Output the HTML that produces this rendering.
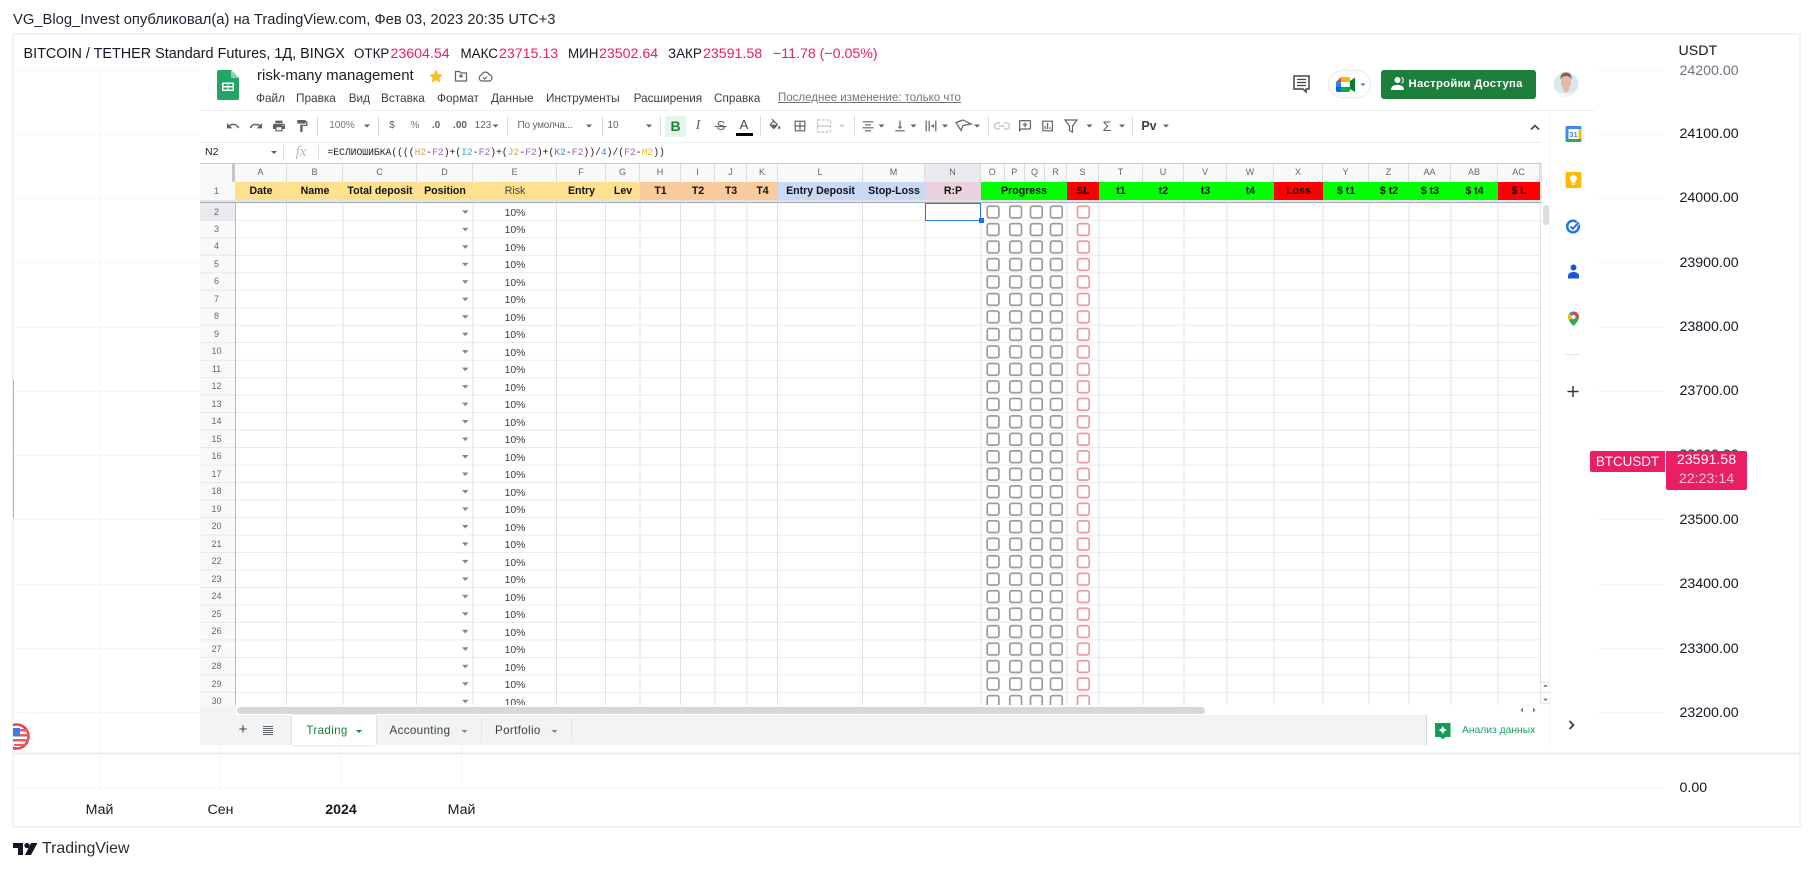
<!DOCTYPE html>
<html><head><meta charset="utf-8"><title>TradingView</title>
<style>
html,body{margin:0;padding:0;background:#fff}
body{width:1814px;height:871px;overflow:hidden;position:relative;font-family:"Liberation Sans",sans-serif;color:#131722}
.a{position:absolute;white-space:nowrap}
.l{font-size:14.2px;line-height:18px;height:18px}
.p{color:#e91e63}
.y{font-size:14.2px;line-height:18px;height:18px;left:1679.5px}
.m{font-size:11.8px;line-height:14px;top:90.5px;color:#3c4043}
.t{font-size:10px;line-height:14px;top:119px;color:#5f6368;text-align:center}
.h{top:163px;height:19px;line-height:19px;font-size:9px;color:#666;text-align:center;background:#f8f9fa;box-sizing:border-box;border-right:1px solid #dcdcdc}
.r{top:182px;height:18px;line-height:19px;font-size:10.6px;font-weight:bold;color:#111;text-align:center}
.tb{font-size:11.6px;line-height:14px;top:724px;letter-spacing:.35px;color:#3c4043}
</style></head><body>

<!-- chart frame and grid -->
<svg class="a" style="left:0;top:0" width="1814" height="871">
<rect x="13" y="34" width="1787" height="793" fill="#fff" stroke="#eeeff1" stroke-width="1.6"/>
<g stroke="#f4f5f7" stroke-width="1">
<path d="M99.5 70V788M220.5 70V788M341 70V788M461.5 70V788"/>
<path d="M13 70.5H1664M13 134.5H1664M13 198.5H1664M13 262.5H1664M13 327.5H1664M13 391.5H1664M13 455.5H1664M13 519.5H1664M13 584.5H1664M13 648.5H1664M13 712.5H1664M13 788.5H1664"/>
</g>
<path d="M13 753.5H1800" stroke="#e6e8ec" stroke-width="1.4"/>
<path d="M13.500 380V518" stroke="#ec9a9f" stroke-width="1"/>
</svg>

<div class="a" style="left:13px;top:11px;font-size:14.75px;line-height:18px;color:#1f2430">VG_Blog_Invest опубликовал(а) на TradingView.com, Фев 03, 2023 20:35 UTC+3</div>

<div class="a l" style="left:23.500px;top:44.500px;font-size:14.4px">BITCOIN / TETHER Standard Futures, 1Д, BINGX</div>
<div class="a l" style="left:354px;top:44.500px;font-size:13.400px">ОТКР</div><div class="a l p" style="left:390.500px;top:44.500px">23604.54</div>
<div class="a l" style="left:460.500px;top:44.500px;font-size:13.400px">МАКС</div><div class="a l p" style="left:499px;top:44.500px">23715.13</div>
<div class="a l" style="left:568px;top:44.500px;font-size:13.400px">МИН</div><div class="a l p" style="left:599px;top:44.500px">23502.64</div>
<div class="a l" style="left:668px;top:44.500px;font-size:13.400px">ЗАКР</div><div class="a l p" style="left:703px;top:44.500px">23591.58</div>
<div class="a l p" style="left:773px;top:44.500px">−11.78 (−0.05%)</div>

<!-- price axis -->
<div class="a y" style="top:42px;left:1678.500px">USDT</div>
<div class="a y" style="top:62px;color:#6d7280">24200.00</div>
<div class="a y" style="top:125px">24100.00</div>
<div class="a y" style="top:189px">24000.00</div>
<div class="a y" style="top:254px">23900.00</div>
<div class="a y" style="top:318px">23800.00</div>
<div class="a y" style="top:382px">23700.00</div>
<div class="a y" style="top:446px">23600.00</div>
<div class="a y" style="top:511px">23500.00</div>
<div class="a y" style="top:575px">23400.00</div>
<div class="a y" style="top:640px">23300.00</div>
<div class="a y" style="top:704px">23200.00</div>
<div class="a" style="left:1679.500px;top:779px;height:13px;overflow:hidden;font-size:14.2px;line-height:18px">0.00</div>

<!-- date axis -->
<div class="a" style="left:69.500px;top:801px;width:60px;text-align:center;font-size:14.2px;line-height:18px">Май</div>
<div class="a" style="left:190.500px;top:801px;width:60px;text-align:center;font-size:14.2px;line-height:18px">Сен</div>
<div class="a" style="left:311px;top:801px;width:60px;text-align:center;font-size:14.2px;line-height:18px;font-weight:bold">2024</div>
<div class="a" style="left:431.500px;top:801px;width:60px;text-align:center;font-size:14.2px;line-height:18px">Май</div>

<!-- tv logo -->
<svg class="a" style="left:13px;top:842px" width="25" height="14" viewBox="0 0 25 14"><path d="M0 1h10v12H5V6H0zM14 1a2.600 2.600 0 1 0 .01 0zM18 1h6.500L18 13h-6z" fill="#131722"/></svg>
<div class="a" style="left:42px;top:840px;font-size:15.9px;line-height:18px;color:#2a2e39">TradingView</div>

<!-- flag -->
<svg class="a" style="left:13px;top:722px" width="18" height="29" viewBox="13 722 18 29">
<circle cx="16.500" cy="736.500" r="12" fill="#fff" stroke="#e8414c" stroke-width="2.600"/>
<path d="M17 729h11v2.500H17zM17 734h12v2.500H17zM13 739h16v2.500H13zM14 744h12v2H14z" fill="#ee5a64"/>
<rect x="13" y="728" width="7" height="8.500" fill="#3d7ee0"/>
</svg>

<!-- SHEETS -->
<div class="a" style="left:200px;top:67px;width:1397px;height:678px;background:#fff"></div>
<div class="a" style="left:0;top:0;width:1814px;height:871px;filter:blur(.3px)">

<!-- header -->
<svg class="a" style="left:217px;top:70px" width="22" height="30" viewBox="0 0 22 30">
<path d="M2 0h12l8 8v20a2 2 0 0 1-2 2H2a2 2 0 0 1-2-2V2a2 2 0 0 1 2-2z" fill="#23a566"/>
<path d="M14 0l8 8h-8z" fill="#8ed1b1"/>
<path d="M5 12.500h12v8.500H5zM6.500 14v2h4v-2zM11.500 14v2h4v-2zM6.500 17.500v2h4v-2zM11.500 17.500v2h4v-2z" fill="#fff" fill-rule="evenodd"/>
</svg>
<div class="a" style="left:257px;top:67px;font-size:15px;line-height:18px;color:#202124">risk-many management</div>
<div class="a m" style="left:256px">Файл</div>
<div class="a m" style="left:296px">Правка</div>
<div class="a m" style="left:348.700px">Вид</div>
<div class="a m" style="left:381px">Вставка</div>
<div class="a m" style="left:437px">Формат</div>
<div class="a m" style="left:491px">Данные</div>
<div class="a m" style="left:546px">Инструменты</div>
<div class="a m" style="left:633.600px">Расширения</div>
<div class="a m" style="left:714px">Справка</div>
<div class="a m" style="left:778px;color:#70757a;text-decoration:underline;font-size:11.500px">Последнее изменение: только что</div>

<!-- button -->
<div class="a" style="left:1381px;top:70px;width:155px;height:29px;background:#1e7e3c;border-radius:3px"></div>
<div class="a" style="left:1408.500px;top:77px;font-size:11.3px;line-height:14px;font-weight:bold;color:#fff;letter-spacing:.3px">Настройки Доступа</div>
<div class="a" style="left:1328px;top:70px;width:43px;height:28px;border:1px solid #e8eaed;border-radius:15px;box-sizing:border-box;background:#fff"></div>

<!-- toolbar text -->
<div class="a t" style="left:322px;width:40px;color:#70757a">100%</div>
<div class="a t" style="left:382px;width:20px">$</div>
<div class="a t" style="left:405px;width:20px;color:#777">%</div>
<div class="a t" style="left:426px;width:20px;font-weight:bold">.0</div>
<div class="a t" style="left:448px;width:24px;font-weight:bold">.00</div>
<div class="a t" style="left:468px;width:30px">123</div>
<div class="a t" style="left:515px;width:60px;letter-spacing:-.2px">По умолча...</div>
<div class="a t" style="left:603px;width:20px">10</div>
<div class="a" style="left:665px;top:116px;width:21px;height:21px;background:#e6f4ea;border-radius:2px"></div>
<div class="a" style="left:665px;top:118px;width:21px;text-align:center;font-size:14px;line-height:16px;font-weight:bold;color:#188038">B</div>
<div class="a" style="left:688px;top:118px;width:20px;text-align:center;font-size:14px;line-height:16px;font-style:italic;font-family:'Liberation Serif',serif;color:#5f6368">I</div>
<div class="a" style="left:711px;top:118px;width:20px;text-align:center;font-size:13px;line-height:16px;color:#5f6368">S</div>
<div class="a" style="left:734px;top:117px;width:20px;text-align:center;font-size:13px;line-height:15px;color:#444">A</div>
<div class="a" style="left:1097px;top:118px;width:20px;text-align:center;font-size:14px;line-height:16px;color:#5f6368">Σ</div>
<div class="a" style="left:1138px;top:118px;width:22px;text-align:center;font-size:12.500px;line-height:16px;font-weight:bold;color:#3c4043">Pv</div>

<!-- formula bar -->
<div class="a" style="left:205px;top:145px;font-size:10.5px;line-height:14px;color:#222">N2</div>
<div class="a" style="left:290px;top:142px;width:22px;text-align:center;font-size:15px;line-height:20px;font-style:italic;font-family:'Liberation Serif',serif;color:#b5b8bc">fx</div>
<div class="a" style="left:327.400px;top:146px;font-family:'Liberation Mono',monospace;font-size:9.700px;line-height:14px;color:#222">=ЕСЛИОШИБКА((((<span style="color:#f09a3e">H2</span>-<span style="color:#9b62c4">F2</span>)+(<span style="color:#32b3c9">I2</span>-<span style="color:#9b62c4">F2</span>)+(<span style="color:#d89a5c">J2</span>-<span style="color:#9b62c4">F2</span>)+(<span style="color:#4a82d8">K2</span>-<span style="color:#9b62c4">F2</span>))/<span style="color:#4a82d8">4</span>)/(<span style="color:#9b62c4">F2</span>-<span style="color:#efb83d">M2</span>))</div>

<!-- grid -->
<svg class="a" style="left:0;top:0" width="1814" height="871">
<defs>
<pattern id="gr" patternUnits="userSpaceOnUse" x="0" y="203.300" width="1814" height="17.480">
<path d="M200 17.200H1541" stroke="#e3e4e5" stroke-width="1"/>
<g fill="none" stroke-width="1.700">
<g stroke="#9a9a9a">
<rect x="987.200" y="2.900" width="11.700" height="11.700" rx="2"/>
<rect x="1009.800" y="2.900" width="11.700" height="11.700" rx="2"/>
<rect x="1030.500" y="2.900" width="11.700" height="11.700" rx="2"/>
<rect x="1050.500" y="2.900" width="11.700" height="11.700" rx="2"/>
</g>
<rect x="1077.500" y="2.900" width="11.700" height="11.700" rx="2" stroke="#ea9a9a"/>
</g>
<path d="M462 7h6.500l-3.250 3.600z" fill="#80868b"/>
</pattern>
<clipPath id="gc"><rect x="200" y="203" width="1341" height="502"/></clipPath>
</defs>
<rect x="200" y="203" width="35" height="502" fill="#f8f9fa"/>
<rect x="200" y="203" width="35" height="17.500" fill="#e8eaed"/>
<g stroke="#dfe0e1" stroke-width="1">
<path d="M286.500 163V705M343 163V705M416.500 163V705M473 163V705M556.500 163V705M605.500 163V705M640 163V705M680.500 163V705M715 163V705M747 163V705M777.500 163V705M862.500 163V705M925 163V705M981 163V705M1067 163V705M1099 163V705M1143 163V705M1184 163V705M1227 163V705M1274 163V705M1323 163V705M1369 163V705M1409 163V705M1451 163V705M1498 163V705"/>
</g>
<rect x="200" y="203" width="1341" height="502" fill="url(#gr)" clip-path="url(#gc)"/>
<path d="M235.500 182V705" stroke="#b8bbbf"/>
<path d="M1541 163V705" stroke="#c8c9ca"/>
</svg>

<!-- column letters -->
<div class="a h" style="left:200px;width:35px;border-right:3px solid #c4c7c9;border-top:1px solid #ccc"></div>
<div class="a h" style="left:235px;width:52px">A</div>
<div class="a h" style="left:287px;width:56px">B</div>
<div class="a h" style="left:343px;width:74px">C</div>
<div class="a h" style="left:417px;width:56px">D</div>
<div class="a h" style="left:473px;width:84px">E</div>
<div class="a h" style="left:557px;width:49px">F</div>
<div class="a h" style="left:606px;width:34px">G</div>
<div class="a h" style="left:640px;width:41px">H</div>
<div class="a h" style="left:681px;width:34px">I</div>
<div class="a h" style="left:715px;width:32px">J</div>
<div class="a h" style="left:747px;width:31px">K</div>
<div class="a h" style="left:778px;width:85px">L</div>
<div class="a h" style="left:863px;width:62px">M</div>
<div class="a h" style="left:925px;width:56px;background:#e8eaed">N</div>
<div class="a h" style="left:981px;width:23.500px">O</div>
<div class="a h" style="left:1004.500px;width:20.500px">P</div>
<div class="a h" style="left:1025px;width:20px">Q</div>
<div class="a h" style="left:1045px;width:22px">R</div>
<div class="a h" style="left:1067px;width:32px">S</div>
<div class="a h" style="left:1099px;width:44px">T</div>
<div class="a h" style="left:1143px;width:41px">U</div>
<div class="a h" style="left:1184px;width:43px">V</div>
<div class="a h" style="left:1227px;width:47px">W</div>
<div class="a h" style="left:1274px;width:49px">X</div>
<div class="a h" style="left:1323px;width:46px">Y</div>
<div class="a h" style="left:1369px;width:40px">Z</div>
<div class="a h" style="left:1409px;width:42px">AA</div>
<div class="a h" style="left:1451px;width:47px">AB</div>
<div class="a h" style="left:1498px;width:42px">AC</div>
<div class="a" style="left:200px;top:162.500px;width:1341px;height:1px;background:#c8cacc"></div>

<!-- row 1 -->
<div class="a" style="left:200px;top:182px;width:35px;height:18px;line-height:18px;background:#f8f9fa;font-size:9px;color:#666;text-align:center;padding-right:2px;box-sizing:border-box">1</div>
<div class="a r" style="left:235px;width:52px;background:#fee08f">Date</div>
<div class="a r" style="left:287px;width:56px;background:#fee08f">Name</div>
<div class="a r" style="left:343px;width:74px;background:#fee08f">Total deposit</div>
<div class="a r" style="left:417px;width:56px;background:#fee08f">Position</div>
<div class="a r" style="left:473px;width:84px;background:#fee08f;font-weight:normal;color:#444">Risk</div>
<div class="a r" style="left:557px;width:49px;background:#fee08f">Entry</div>
<div class="a r" style="left:606px;width:34px;background:#fee08f">Lev</div>
<div class="a r" style="left:640px;width:41px;background:#f9cb9c">T1</div>
<div class="a r" style="left:681px;width:34px;background:#f9cb9c">T2</div>
<div class="a r" style="left:715px;width:32px;background:#f9cb9c">T3</div>
<div class="a r" style="left:747px;width:31px;background:#f9cb9c">T4</div>
<div class="a r" style="left:778px;width:85px;background:#c9daf8">Entry Deposit</div>
<div class="a r" style="left:863px;width:62px;background:#c9daf8">Stop-Loss</div>
<div class="a r" style="left:925px;width:56px;background:#ead1dc">R:P</div>
<div class="a r" style="left:981px;width:86px;background:#00ff00">Progress</div>
<div class="a r" style="left:1067px;width:32px;background:#ff0000">SL</div>
<div class="a r" style="left:1099px;width:44px;background:#00ff00">t1</div>
<div class="a r" style="left:1143px;width:41px;background:#00ff00">t2</div>
<div class="a r" style="left:1184px;width:43px;background:#00ff00">t3</div>
<div class="a r" style="left:1227px;width:47px;background:#00ff00">t4</div>
<div class="a r" style="left:1274px;width:49px;background:#ff0000">Loss</div>
<div class="a r" style="left:1323px;width:46px;background:#00ff00">$ t1</div>
<div class="a r" style="left:1369px;width:40px;background:#00ff00">$ t2</div>
<div class="a r" style="left:1409px;width:42px;background:#00ff00">$ t3</div>
<div class="a r" style="left:1451px;width:47px;background:#00ff00">$ t4</div>
<div class="a r" style="left:1498px;width:42px;background:#ff0000">$ L</div>
<div class="a" style="left:200px;top:200px;width:1341px;height:2px;background:#dfe3e8"></div>
<div class="a" style="left:200px;top:202px;width:1341px;height:1.200px;background:#a9adb1"></div>

<!-- row numbers and risk column -->
<div class="a" style="left:200px;top:203.500px;width:33px;height:501.500px;overflow:hidden;text-align:center;font-size:9px;line-height:17.480px;color:#666;white-space:normal">2<br>3<br>4<br>5<br>6<br>7<br>8<br>9<br>10<br>11<br>12<br>13<br>14<br>15<br>16<br>17<br>18<br>19<br>20<br>21<br>22<br>23<br>24<br>25<br>26<br>27<br>28<br>29<br>30</div>
<div class="a" style="left:473px;top:205px;width:84px;height:500px;overflow:hidden;text-align:center;font-size:10.400px;line-height:17.480px;color:#3a3a3a;white-space:normal">10%<br>10%<br>10%<br>10%<br>10%<br>10%<br>10%<br>10%<br>10%<br>10%<br>10%<br>10%<br>10%<br>10%<br>10%<br>10%<br>10%<br>10%<br>10%<br>10%<br>10%<br>10%<br>10%<br>10%<br>10%<br>10%<br>10%<br>10%<br>10%</div>

<!-- selection -->
<div class="a" style="left:925px;top:203px;width:56px;height:17.500px;box-sizing:border-box;border:1.500px solid #2a78e0"></div>
<div class="a" style="left:978.500px;top:218px;width:5px;height:5px;background:#1a73e8"></div>

<!-- scrollbars -->
<div class="a" style="left:1541px;top:200px;width:9px;height:515px;background:#fff"></div>
<div class="a" style="left:1542.600px;top:205px;width:6px;height:20px;background:#dadce0;border-radius:3px"></div>
<div class="a" style="left:200px;top:705px;width:1350px;height:10px;background:#fff"></div>
<div class="a" style="left:200px;top:705px;width:36px;height:10px;background:#f1f3f4"></div>
<div class="a" style="left:236.500px;top:706.500px;width:968px;height:7.500px;background:#d5d7da;border-radius:4px"></div>

<!-- tabs -->
<div class="a" style="left:200px;top:715px;width:1226px;height:30px;background:#f1f3f4"></div>
<div class="a" style="left:292px;top:715px;width:84px;height:30px;background:#fff;box-shadow:0 0 2px #c8cacc"></div>
<div class="a" style="left:1426px;top:715px;width:124px;height:30px;background:#fff;border-left:1px solid #d5d7da;box-sizing:border-box"></div>
<div class="a" style="left:238px;top:722px;width:10px;text-align:center;font-size:15px;line-height:16px;color:#444">+</div>
<div class="a tb" style="left:306.400px;color:#188038">Trading</div>
<div class="a tb" style="left:389.500px">Accounting</div>
<div class="a tb" style="left:495px">Portfolio</div>
<div class="a" style="left:1462px;top:724px;font-size:10.300px;line-height:14px;color:#1aa260">Анализ данных</div>

<!-- icons -->
<svg class="a" style="left:0;top:0" width="1814" height="871">
<g fill="#5f6368">
<g transform="translate(225.800 118.800) scale(.6)"><path d="M12.500 8c-2.650 0-5.050.99-6.900 2.600L2 7v9h9l-3.620-3.620c1.390-1.160 3.160-1.880 5.120-1.880 3.540 0 6.550 2.310 7.600 5.500l2.370-.78C21.080 11.030 17.150 8 12.500 8z"/></g>
<g transform="translate(248.800 118.800) scale(.6)"><path d="M18.400 10.600C16.550 8.990 14.150 8 11.500 8c-4.650 0-8.580 3.030-9.960 7.220L3.900 16c1.050-3.190 4.050-5.500 7.600-5.500 1.950 0 3.730.72 5.120 1.880L13 16h9V7l-3.600 3.600z"/></g>
<g transform="translate(271.800 118.800) scale(.6)"><path d="M19 8H5c-1.660 0-3 1.340-3 3v6h4v4h12v-4h4v-6c0-1.660-1.340-3-3-3zm-3 11H8v-5h8v5zm3-7c-.55 0-1-.45-1-1s.45-1 1-1 1 .45 1 1-.45 1-1 1zm-1-9H6v4h12V3z"/></g>
<g transform="translate(294.800 118.800) scale(.6)"><path d="M18 4V3c0-.55-.45-1-1-1H5c-.55 0-1 .45-1 1v4c0 .55.45 1 1 1h12c.55 0 1-.45 1-1V6h1v4H9v11c0 .55.45 1 1 1h2c.55 0 1-.45 1-1v-9h8V4h-3z"/></g>
<g transform="translate(767.800 118.800) scale(.6)"><path d="M16.560 8.940L7.620 0 6.210 1.410l2.380 2.380-5.150 5.150c-.59.59-.59 1.540 0 2.120l5.500 5.500c.29.29.68.44 1.060.44s.77-.15 1.060-.44l5.500-5.500c.59-.58.59-1.530 0-2.120zM5.210 10L10 5.210 14.790 10H5.210zM19 11.500s-2 2.170-2 3.500c0 1.100.9 2 2 2s2-.9 2-2c0-1.330-2-3.500-2-3.500z"/></g>
<g transform="translate(792.800 118.800) scale(.6)"><path d="M3 3v18h18V3H3zm8 16H5v-6h6v6zm0-8H5V5h6v6zm8 8h-6v-6h6v6zm0-8h-6V5h6v6z"/></g>
<g transform="translate(860.800 118.800) scale(.6)"><path d="M3 4h18v2H3zM7 9h10v2H7zM3 14h18v2H3zM7 19h10v2H7z"/></g>
<g transform="translate(892.800 118.800) scale(.6)"><path d="M16 13h-3V3h-2v10H8l4 4 4-4zM4 19v2h16v-2H4z"/></g>
<g transform="translate(923.800 118.800) scale(.6)"><path d="M3 3h2v18H3zM19 3h2v18h-2zM8 3h2v18H8zM12 11h3V8l3 4-3 4v-3h-3z"/></g>
<g transform="translate(1017.800 118.800) scale(.6)"><path d="M20 2H4c-1.100 0-2 .9-2 2v18l4-4h14c1.100 0 2-.9 2-2V4c0-1.100-.9-2-2-2zm0 14H5.170L4 17.170V4h16v12zM11 6h2v3h3v2h-3v3h-2v-3H8V9h3z"/></g>
<g transform="translate(1040.400 118.800) scale(.6)"><path d="M3 3h18v18H3zM5 5v14h14V5zM7 12h2v5H7zM11 7h2v10h-2zM15 14h2v3h-2z" fill-rule="evenodd"/></g>
</g>
<g fill="none" stroke="#5f6368" stroke-width="1.200">
<path d="M963 120l-7 2.500 5 8 2-5 5-1 3-.5z"/>
<path d="M1065 120h12l-4.500 6v6l-3-1.500v-4.500z"/>
</g>
<g fill="none" stroke="#bdc1c6" stroke-width="1.200">
<rect x="817.500" y="120" width="13" height="12" stroke-dasharray="3 1.500"/>
<path d="M817 126h14"/>
<path d="M1000 123h-2.500a3 3 0 0 0 0 6h2.500M1004 123h2.500a3 3 0 0 1 0 6h-2.500M999 126h6"/>
</g>
<path d="M714.500 126.500h12" stroke="#5f6368" stroke-width="1.200"/>
<rect x="736" y="133" width="17" height="3" fill="#000"/>
<path d="M317.500 116v20M378.500 116v20M507.500 116v20M602.500 116v20M660.500 116v20M760.500 116v20M854.500 116v20M988.500 116v20M1132.500 116v20M283.500 145v15M318.500 145v15" stroke="#dadce0"/>
<g fill="#5f6368">
<path d="M364 124.500h6l-3 3zM492.500 124.500h6l-3 3zM586 124.500h6l-3 3zM646 124.500h6l-3 3zM878.500 124.500h6l-3 3zM910.500 124.500h6l-3 3zM942 124.500h6l-3 3zM974 124.500h6l-3 3zM1086.500 124.500h6l-3 3zM1119 124.500h6l-3 3zM1163 124.500h6l-3 3zM271 151h6l-3 3z"/>
<path d="M461.500 730h6l-3 3zM551.500 730h6l-3 3z" fill="#80868b"/>
</g>
<path d="M839 124.500h6l-3 3z" fill="#ccc"/>
<path d="M356 730h6l-3 3z" fill="#188038"/>
<path d="M200 110.500H1594M200 142.500H1541" stroke="#ececee"/>
<path d="M1550 110V745" stroke="#f0f1f2"/>
<path d="M1531 129.500l4-4 4 4" fill="none" stroke="#444" stroke-width="1.600"/>
<path d="M436 69.500l2.100 4.500 4.900.6-3.600 3.300 1 4.800-4.400-2.400-4.400 2.400 1-4.800-3.600-3.300 4.900-.6z" fill="#f6bf26"/>
<path d="M455.500 71.500h4l1.500 1.500h5.500v8h-11z M459 76h4M461 74v4" fill="none" stroke="#5f6368" stroke-width="1.200"/>
<path d="M482 81a3 3 0 0 1-.5-5.900 4 4 0 0 1 7.500-.6 3.300 3.300 0 0 1 .5 6.500zM483 77.500l1.500 1.500 2.500-2.500" fill="none" stroke="#5f6368" stroke-width="1.200"/>
<path d="M1294 76h15v13h-3v3l-3-3h-9z" fill="none" stroke="#444" stroke-width="1.500"/>
<path d="M1297 79.500h9M1297 82.500h9M1297 85.500h9" stroke="#444" stroke-width="1.200"/>
<path d="M1336 82l5-5v5z" fill="#ea4335"/><path d="M1341 77h9v5h-9z" fill="#ffba00"/>
<path d="M1336 82h5v5h-5z" fill="#2684fc"/><path d="M1336 87h5v5h-3a2 2 0 0 1-2-2z" fill="#0066da"/>
<path d="M1341 87h9v3a2 2 0 0 1-2 2h-7z" fill="#00ac47"/><path d="M1350 81v8l5 3V77.500z" fill="#00832d"/>
<path d="M1360.500 83.500h5l-2.500 2.500z" fill="#1a73e8"/>
<circle cx="1397.500" cy="80" r="3" fill="#fff"/><path d="M1391 90c0-4 3-5 6.500-5s6.500 1 6.500 5z" fill="#fff"/><path d="M1401.500 77.500a3 3 0 0 1 0 5.500" stroke="#fff" fill="none"/>
<circle cx="1566" cy="84.500" r="12.500" fill="#d8e8f2"/>
<path d="M1554 88c1 6 6 9 12 9s11-3 12-9c-3 4-5 5-12 5s-9-1-12-5z" fill="#f4f5f7"/>
<ellipse cx="1566" cy="82" rx="5" ry="7" fill="#e3b9a2"/>
<path d="M1560.500 80c-.5-6 2.500-7.500 5.500-7.500s6 1.500 5.500 7.500c-1-3-3-4-5.500-4s-4.500 1-5.500 4z" fill="#80604c"/>
<path d="M1563 90l3 3 3-3v-2h-6z" fill="#e3b9a2"/>
<rect x="1565.500" y="126" width="16" height="16" rx="1.500" fill="#4285f4"/>
<rect x="1568.500" y="129" width="10" height="10" fill="#fff"/>
<text x="1573.500" y="137" font-size="7.500" text-anchor="middle" fill="#4285f4" font-family="Liberation Sans, sans-serif" font-weight="bold">31</text>
<path d="M1578.500 129h3v10h-3z" fill="#fbbc04"/><path d="M1565.500 139h13v3h-11a2 2 0 0 1-2-2z" fill="#34a853"/><path d="M1578.500 139h3l-3 3z" fill="#ea4335"/>
<rect x="1565.500" y="172" width="16" height="16" rx="1.500" fill="#fbbc04"/>
<path d="M1573.500 175a3.300 3.300 0 0 0-2 6v1.500h4V181a3.300 3.300 0 0 0-2-6zM1571.800 183.500h3.400v1.200h-3.400z" fill="#fff"/>
<circle cx="1573" cy="226.500" r="5.800" fill="none" stroke="#1a73e8" stroke-width="2.400"/>
<path d="M1570.500 226.500l2.300 2.300 6-6.500" fill="none" stroke="#fff" stroke-width="3.400"/>
<path d="M1570.500 226.500l2.300 2.300 6-6.500" fill="none" stroke="#1a73e8" stroke-width="2"/>
<circle cx="1573.500" cy="267.500" r="3" fill="#1a56d8"/>
<path d="M1568 278.500v-2.500c0-2.500 2.500-4 5.500-4s5.500 1.500 5.500 4v2.500z" fill="#1a56d8"/>
<path d="M1573.500 311.500a5.500 5.500 0 0 0-5.500 5.500c0 4 5.500 9 5.500 9s5.500-5 5.500-9a5.500 5.500 0 0 0-5.500-5.500z" fill="#34a853"/>
<path d="M1573.500 311.500a5.500 5.500 0 0 0-4.300 2l4.300 3.500z" fill="#4285f4"/><path d="M1573.500 311.500a5.500 5.500 0 0 1 5.500 5.500h-5.500z" fill="#ea4335"/><path d="M1568 317c0 1 .5 2.300 1.200 3.500l4.300-3.500-4.300-3.500a5.500 5.500 0 0 0-1.200 3.500z" fill="#fbbc04"/>
<circle cx="1573.500" cy="317" r="2" fill="#fff"/>
<path d="M1565 354.500h16" stroke="#e6e7e9"/>
<path d="M1573 386v11M1567.500 391.500h11" stroke="#333" stroke-width="1.500"/>
<path d="M1541 682.500h9M1541 703.500h9M1541 692.500h9" stroke="#e2e3e5"/>
<path d="M1544 686.500h3l-1.500-1.500zM1544 699h3l-1.500 1.500zM1522.500 708.500v3l-1.500-1.500zM1533.500 708.500v3l1.500-1.500z" stroke="#777" stroke-width=".8" fill="#777"/>
<path d="M263 726.500h10M263 728.500h10M263 730.500h10M263 732.500h10M263 734.500h10" stroke="#5f6368" stroke-width=".9"/>
<path d="M481.500 718v24M571.500 718v24" stroke="#e3e4e6"/>
<path d="M1435 723h15.500v14l-5 0-2.700 2.300-2.700-2.300h-5z" fill="#0f9d58"/>
<path d="M1442.800 725.500c.5 2.500 2 4 4.500 4.500-2.500.5-4 2-4.500 4.500-.5-2.500-2-4-4.500-4.500 2.500-.5 4-2 4.500-4.500z" fill="#fff"/>
<path d="M1569.500 721l4 4-4 4" fill="none" stroke="#3c4043" stroke-width="1.800"/>
</svg>
</div>

<!-- price tags (above the sheet overlay) -->
<div class="a" style="left:1590px;top:451px;width:75px;height:21px;background:#e91e63;border-radius:2px 0 0 2px;color:#fff;font-size:13.400px;line-height:21px;text-align:center">BTCUSDT</div>
<div class="a" style="left:1666px;top:451px;width:81px;height:39px;background:#e91e63;border-radius:0 2px 2px 2px;color:#fff;font-size:14.2px;line-height:19px;text-align:center">23591.58<br><span style="color:#fbc4d7">22:23:14</span></div>
</body></html>
